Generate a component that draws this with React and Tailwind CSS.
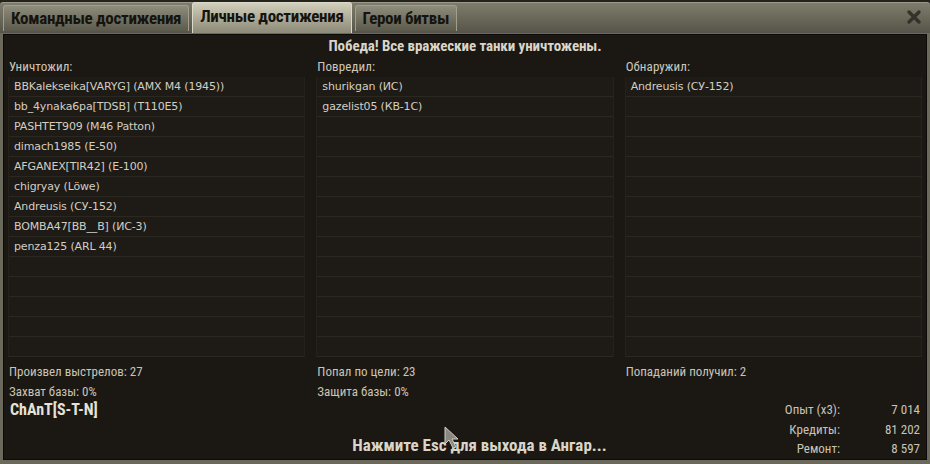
import React from 'react'

const narrow = { fontFamily: '"Roboto Condensed", "Liberation Sans Narrow", Roboto, sans-serif' }
const tahoma = { fontFamily: '"DejaVu Sans", "Liberation Sans", sans-serif' }

const killed = [
  'BBKalekseika[VARYG] (AMX M4 (1945))',
  'bb_4ynaka6pa[TDSB] (T110E5)',
  'PASHTET909 (M46 Patton)',
  'dimach1985 (E-50)',
  'AFGANEX[TIR42] (E-100)',
  'chigryay (Löwe)',
  'Andreusis (СУ-152)',
  'BOMBA47[BB__B] (ИС-3)',
  'penza125 (ARL 44)',
]
const damaged = ['shurikgan (ИС)', 'gazelist05 (КВ-1С)']
const spotted = ['Andreusis (СУ-152)']

const ROWS = 14

function List({ title, items }) {
  const rows = Array.from({ length: ROWS }, (_, i) => items[i] || '')
  return (
    <div className="flex flex-col">
      <div className="h-[20px] pl-[1px] text-[13px] leading-[20px] tracking-[0.1px] text-[#cdc8bb]" style={narrow}>
        {title}
      </div>
      <div className="bg-[#1e1b16] border-x border-[#25221c]">
        {rows.map((r, i) => (
          <div
            key={i}
            className="h-[20px] border-b border-[#2b2821] pl-[5px] text-[11px] leading-[20px] tracking-[-0.15px] text-[#d2cec4] whitespace-nowrap"
            style={tahoma}
          >
            {r}
          </div>
        ))}
      </div>
    </div>
  )
}

function Tab({ label, active }) {
  return (
    <div
      className={
        'px-[7px] rounded-t-[3px] flex items-center text-[17px] font-bold tracking-[-0.3px] text-[#15140f] border-t border-x ' +
        (active
          ? 'bg-gradient-to-b from-[#d2d0bc] via-[#aeac98] to-[#8c8a78] border-[#dcdac8] h-[31px] pb-[3px]'
          : 'bg-gradient-to-b from-[#8e8c7c] via-[#747262] to-[#5c5a4c] border-[#a09e8c] h-[26px] mb-[2px]')
      }
      style={narrow}
    >
      {label}
    </div>
  )
}

export default function App() {
  return (
    <div className="w-[930px] h-[464px] bg-[#24221d] flex flex-col overflow-hidden relative" style={narrow}>
      {/* tab bar */}
      <div className="h-[31px] mt-[2px] flex items-end gap-[3px] pl-[3px] pr-[8px] bg-gradient-to-b from-[#7e7c6c] via-[#6a6858] to-[#56544a] rounded-t-[3px] border-t border-[#9a9886]">
        <Tab label="Командные достижения" />
        <Tab label="Личные достижения" active />
        <Tab label="Герои битвы" />
        <div className="flex-1" />
        <div className="self-center pb-[2px]">
          <svg width="16" height="16" viewBox="0 0 16 16">
            <path d="M3 3 L13 13 M13 3 L3 13" stroke="#34322b" strokeWidth="3.4" strokeLinecap="round" />
          </svg>
        </div>
      </div>

      {/* content frame */}
      <div className="h-[431px] bg-[#6b695b] px-[3px] pb-[4px] pt-[1px]">
        <div className="h-full bg-[#1b1814] border border-[#0d0b09] flex flex-col px-[4px]">
          <div className="h-[22px] pt-[1px] text-center text-[15px] font-bold leading-[20px] tracking-[-0.1px] text-[#d9d5c8]">
            Победа! Все вражеские танки уничтожены.
          </div>

          <div className="grid grid-cols-3 gap-[11px]">
            <List title="Уничтожил:" items={killed} />
            <List title="Повредил:" items={damaged} />
            <List title="Обнаружил:" items={spotted} />
          </div>

          <div className="grid grid-cols-3 gap-[11px] pt-[5px] text-[13px] leading-[20px] text-[#c9c4b6]">
            <div className="flex flex-col pl-[1px]">
              <span>Произвел выстрелов: 27</span>
              <span>Захват базы: 0%</span>
            </div>
            <div className="flex flex-col pl-[1px]">
              <span>Попал по цели: 23</span>
              <span>Защита базы: 0%</span>
            </div>
            <div className="flex flex-col pl-[1px]">
              <span>Попаданий получил: 2</span>
            </div>
          </div>

          <div className="flex h-[57px]">
            <div className="w-[168px] pl-[2px] -mt-[1px] text-[16px] font-bold leading-[17px] text-[#e6e2d6]">ChAnT[S-T-N]</div>
            <div className="flex-1 flex items-end justify-center pb-[4px] text-[17px] font-bold leading-[20px] text-[#d9d5c8]">
              Нажмите Esc для выхода в Ангар...
            </div>
            <div className="w-[139px] grid grid-cols-[1fr_80px] content-start -mt-[2px] pr-[2px] text-[13px] leading-[19.5px] text-[#c9c4b6]">
              <span className="text-right">Опыт (x3):</span>
              <span className="text-right">7 014</span>
              <span className="text-right">Кредиты:</span>
              <span className="text-right">81 202</span>
              <span className="text-right">Ремонт:</span>
              <span className="text-right">8 597</span>
            </div>
          </div>
        </div>
      </div>

      {/* mouse pointer */}
      <svg className="absolute left-[444px] top-[426px]" width="20" height="24" viewBox="0 0 20 24">
        <path d="M1 1 L1 18 L5 14 L9 22 L12 21 L8 13 L14 13 Z" fill="#8a8880" stroke="#cfcdc4" strokeWidth="1" />
      </svg>
    </div>
  )
}
